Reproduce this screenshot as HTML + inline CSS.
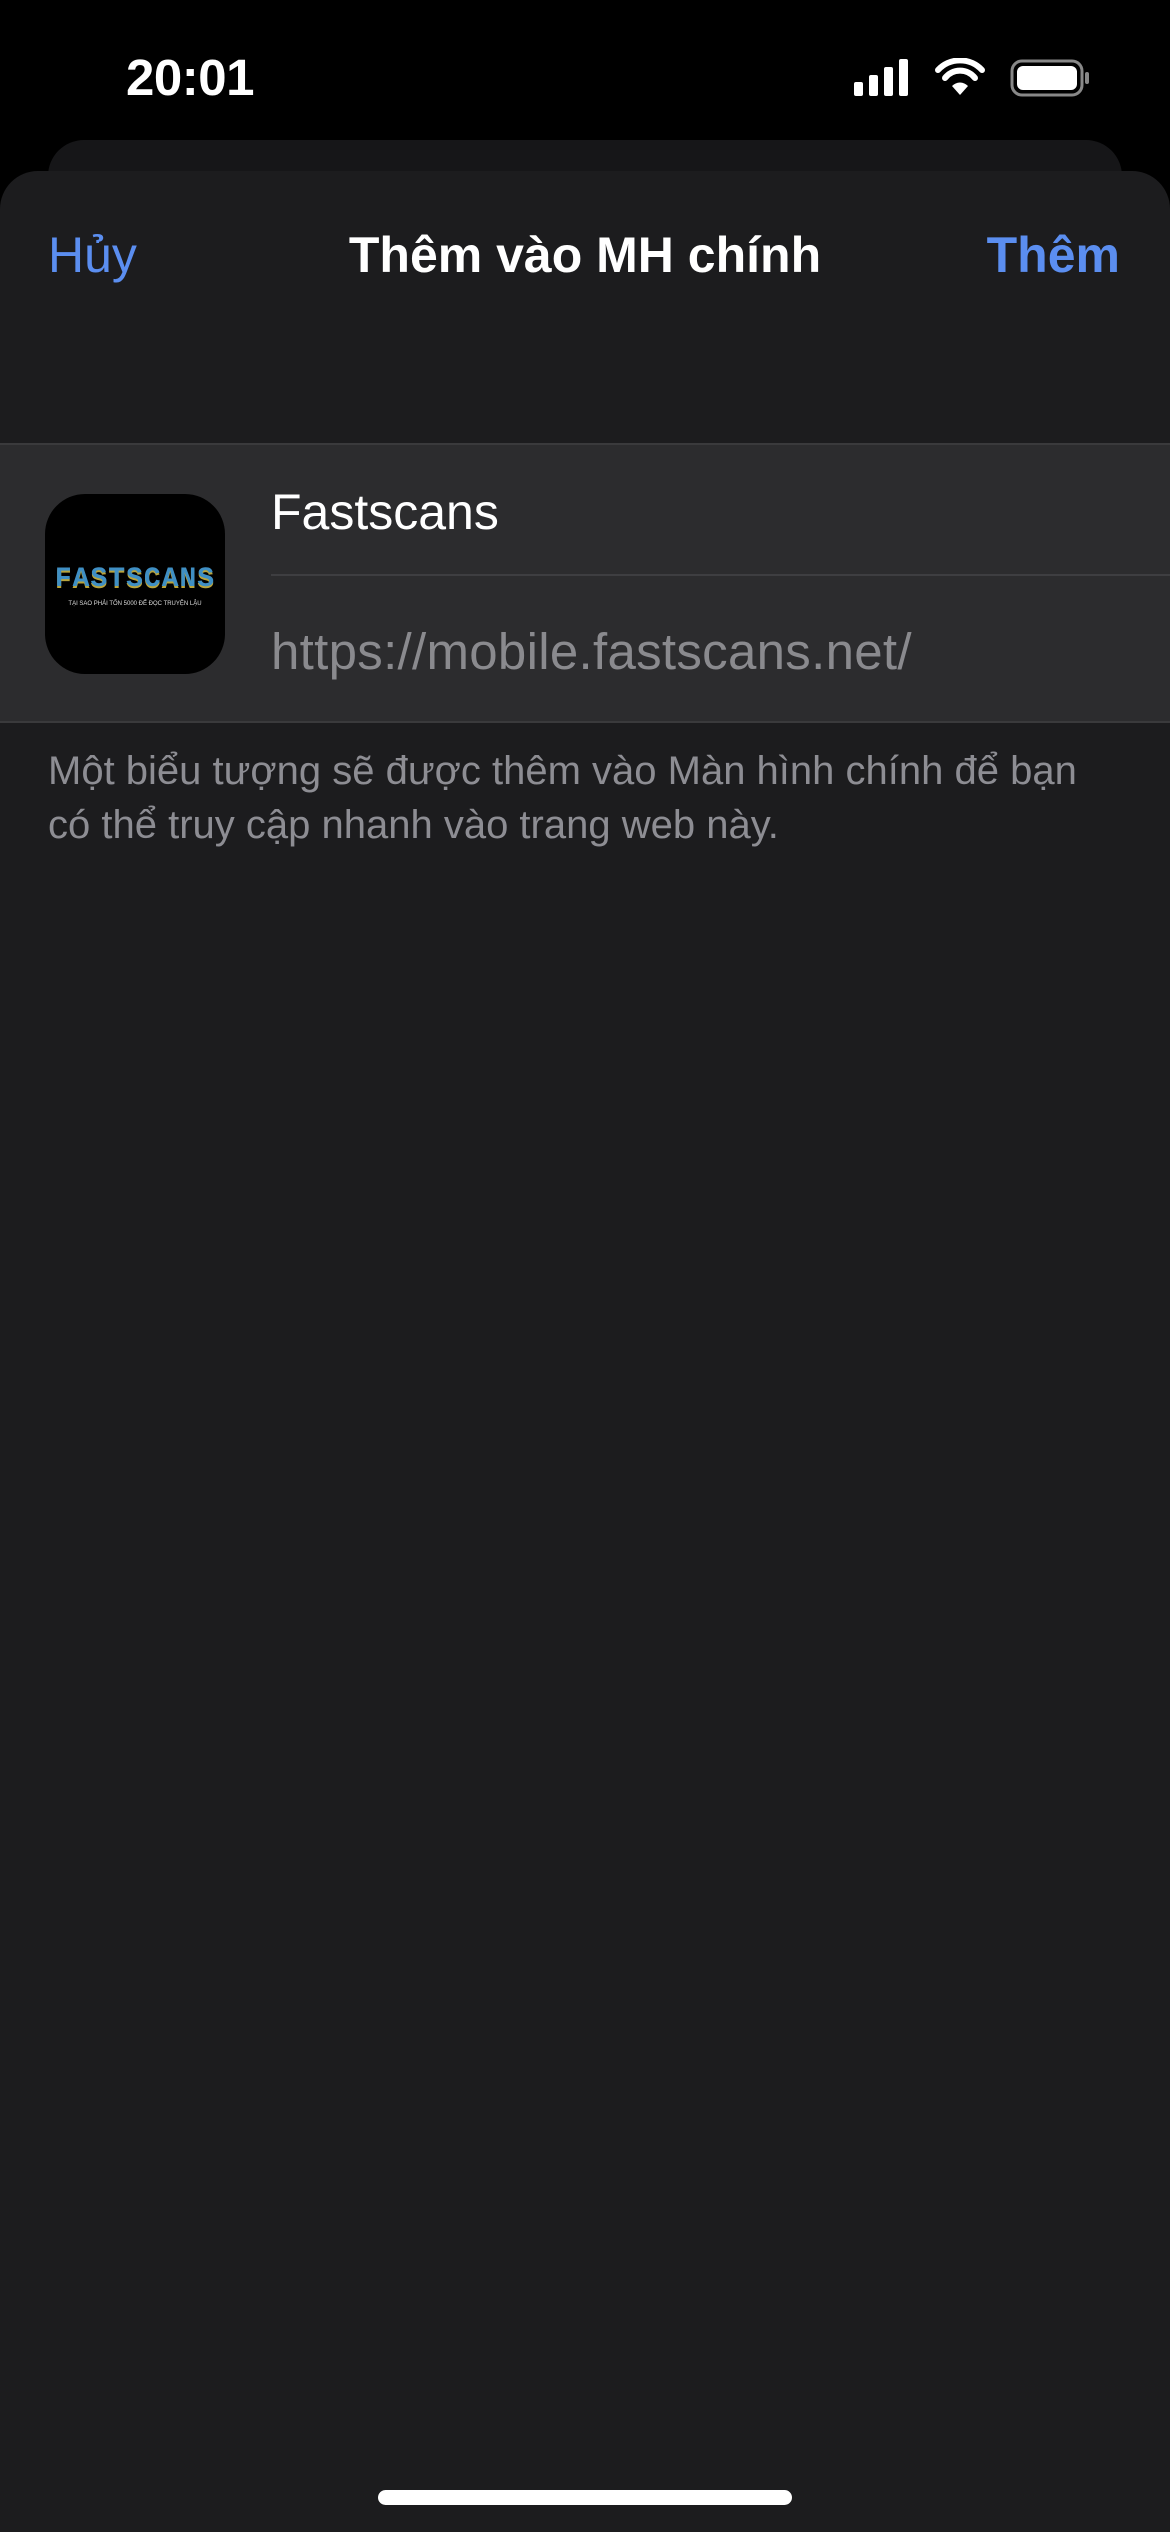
<!DOCTYPE html>
<html><head><meta charset="utf-8"><style>
*{margin:0;padding:0;box-sizing:border-box}
body{width:1170px;height:2532px;background:#000;position:relative;overflow:hidden;font-family:"Liberation Sans","Noto Sans CJK SC",sans-serif}
.abs{position:absolute}
</style></head><body>
<div class="abs" style="left:126px;top:48px;font-size:51px;font-weight:bold;color:#fff;letter-spacing:-0.5px">20:01</div>
<svg class="abs" style="left:852px;top:58px" width="240" height="40" viewBox="0 0 240 40">
<rect x="2" y="24" width="9" height="14" rx="2" fill="#fff"/>
<rect x="17" y="17" width="9" height="21" rx="2" fill="#fff"/>
<rect x="32" y="9" width="9" height="29" rx="2" fill="#fff"/>
<rect x="47" y="1" width="9" height="37" rx="2" fill="#fff"/>
<path d="M86 12 a30 30 0 0 1 44 0" stroke="#fff" stroke-width="6" fill="none" stroke-linecap="round"/>
<path d="M93 20 a19 19 0 0 1 30 0" stroke="#fff" stroke-width="6" fill="none" stroke-linecap="round"/>
<path d="M100 28 l8 9 l8 -9 a11 11 0 0 0 -16 0z" fill="#fff"/>
<rect x="160" y="3" width="70" height="34" rx="10" stroke="#888" stroke-width="3" fill="none"/>
<rect x="165" y="8" width="60" height="24" rx="6" fill="#fff"/>
<rect x="233" y="14" width="4" height="12" rx="2" fill="#888"/>
</svg>
<div class="abs" style="left:48px;top:140px;width:1074px;height:100px;background:#161618;border-radius:36px 36px 0 0"></div>
<div class="abs" style="left:0;top:171px;width:1170px;height:2361px;background:#1c1c1e;border-radius:38px 38px 0 0"></div>
<div class="abs" style="left:48px;top:226px;font-size:50px;color:#5b8ef0">Hủy</div>
<div class="abs" style="left:0;width:1170px;top:226px;text-align:center;font-size:50px;font-weight:bold;color:#fff">Thêm vào MH chính</div>
<div class="abs" style="right:50px;top:226px;font-size:50px;font-weight:bold;color:#5b8ef0">Thêm</div>
<div class="abs" style="left:0;top:443px;width:1170px;height:280px;background:#2c2c2e;border-top:2px solid #3a3a3c;border-bottom:2px solid #3a3a3c"></div>
<div class="abs" style="left:45px;top:494px;width:180px;height:180px;background:#000;border-radius:40px;text-align:center">
<div style="margin-top:70px;font-size:28px;font-weight:bold;color:#3f8fc4;letter-spacing:1px;font-family:'Liberation Mono',monospace;text-shadow:0 2px 0 #b9a43c">FASTSCANS</div>
<div style="font-size:6px;color:#ddd;margin-top:6px">TẠI SAO PHẢI TỐN 5000 ĐỂ ĐỌC TRUYỆN LẬU</div>
</div>
<div class="abs" style="left:271px;top:483px;font-size:50px;color:#fff">Fastscans</div>
<div class="abs" style="left:271px;top:574px;width:899px;height:2px;background:#3e3e41"></div>
<div class="abs" style="left:271px;top:622px;font-size:51px;color:#8a8a8e;letter-spacing:0.3px">https://mobile.fastscans.net/</div>
<div class="abs" style="left:48px;top:744px;width:1080px;font-size:40px;line-height:54px;color:#8d8d93">Một biểu tượng sẽ được thêm vào Màn hình chính để bạn có thể truy cập nhanh vào trang web này.</div>
<div class="abs" style="left:378px;top:2490px;width:414px;height:15px;border-radius:8px;background:#fff"></div>
</body></html>
